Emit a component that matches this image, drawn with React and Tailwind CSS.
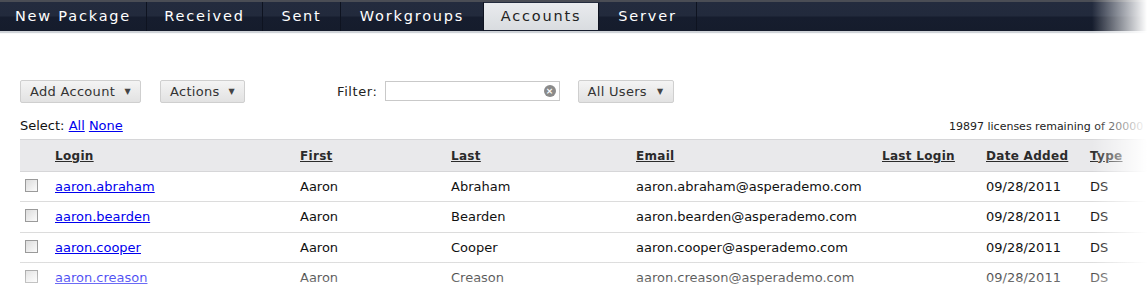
import React from 'react';

const tabs = ['New Package', 'Received', 'Sent', 'Workgroups', 'Accounts', 'Server'];
const tabWidths = ['w-[147px]', 'w-[116px]', 'w-[78px]', 'w-[143px]', 'w-[115px]', 'w-[98px]'];

const rows = [
    { login: 'aaron.abraham', first: 'Aaron', last: 'Abraham', email: 'aaron.abraham@asperademo.com', date: '09/28/2011', type: 'DS' },
    { login: 'aaron.bearden', first: 'Aaron', last: 'Bearden', email: 'aaron.bearden@asperademo.com', date: '09/28/2011', type: 'DS' },
    { login: 'aaron.cooper', first: 'Aaron', last: 'Cooper', email: 'aaron.cooper@asperademo.com', date: '09/28/2011', type: 'DS' },
    { login: 'aaron.creason', first: 'Aaron', last: 'Creason', email: 'aaron.creason@asperademo.com', date: '09/28/2011', type: 'DS' }
];

function DropButton({ label, width }) {
    return (
        <button className={`${width} h-[23px] flex items-center justify-between pl-[9px] pr-[9px] border border-[#cfcfcf] rounded-[2px] bg-gradient-to-b from-[#f4f4f4] to-[#e2e2e2] text-[13px] tracking-[0.3px] text-[#333]`}>
            <span>{label}</span>
            <span className="text-[8px] text-[#444] mt-[1px]">▼</span>
        </button>
    );
}

function Checkbox() {
    return <span className="block w-[13px] h-[13px] border border-[#9a9a9a] bg-gradient-to-br from-[#dcdcdc] to-[#fbfbfb]" />;
}

export default function App() {
    return (
        <div className="relative w-[1147px] h-[288px] overflow-hidden bg-white text-[#111]" style={{ fontFamily: '"DejaVu Sans", Verdana, sans-serif' }}>
            {/* Top navigation */}
            <div className="border-t-2 border-[#4a4d55] shadow-[0_2px_1px_#cfd3d8]">
                <div className="flex h-[29px] bg-[linear-gradient(to_bottom,#232b3e_0%,#222a3c_48%,#161d2e_52%,#151c2c_100%)]">
                    {tabs.map((tab, i) => (
                        <div
                            key={tab}
                            className={`${tabWidths[i]} flex items-center justify-center border-r border-[#0e1320] text-[14.5px] tracking-[1.8px] ${tab === 'Accounts' ? 'bg-gradient-to-b from-[#e9ebee] to-[#d9dce0] text-[#222] mt-[1px] mb-[1px]' : 'text-white'}`}
                        >
                            {tab}
                        </div>
                    ))}
                </div>
            </div>

            {/* Toolbar */}
            <div className="flex items-center mt-[49px] pl-[20px] h-[23px]">
                <DropButton label="Add Account" width="w-[121px]" />
                <div className="ml-[19px]"><DropButton label="Actions" width="w-[85px]" /></div>
                <span className="ml-[92px] text-[13px] tracking-[0.6px] text-[#222]">Filter:</span>
                <div className="ml-[7px] relative w-[175px] h-[20px] border border-[#c9c9c9] -mt-[2px]">
                    <span className="absolute right-[3px] top-[3px] w-[12px] h-[12px] rounded-full bg-[#8a8a8a] text-white text-[9px] leading-[12px] text-center font-bold">×</span>
                </div>
                <div className="ml-[18px]"><DropButton label="All Users" width="w-[96px]" /></div>
            </div>

            {/* Select / licenses */}
            <div className="flex items-end justify-between mt-[15px] pl-[20px] h-[17px]">
                <div className="text-[13px] text-[#111]">
                    Select: <a className="text-[#0000ee] underline">All</a> <a className="text-[#0000ee] underline">None</a>
                </div>
                <div className="text-[11px] text-[#222] whitespace-nowrap w-[198px] overflow-hidden">19897 licenses remaining of 20000</div>
            </div>

            {/* Table */}
            <div className="ml-[20px] mt-[4px] w-[1200px]">
                <div className="flex items-center h-[33px] bg-[#e9e9eb] border-t border-b border-[#d6d6d8] text-[12px] font-bold tracking-[0.3px] text-[#2b2b2b]">
                    <div className="w-[35px]" />
                    <div className="w-[245px]"><span className="underline">Login</span></div>
                    <div className="w-[151px]"><span className="underline">First</span></div>
                    <div className="w-[185px]"><span className="underline">Last</span></div>
                    <div className="w-[246px]"><span className="underline">Email</span></div>
                    <div className="w-[104px]"><span className="underline">Last Login</span></div>
                    <div className="w-[104px]"><span className="underline">Date Added</span></div>
                    <div className="w-[60px]"><span className="underline">Type</span></div>
                </div>
                {rows.map((r, i) => (
                    <div key={r.login} className={`flex items-center ${i === 1 ? 'h-[31px]' : 'h-[30px]'} border-b border-[#dcdcdc] text-[13px] text-[#111]`}>
                        <div className="w-[35px] pl-[5px] -mt-[3px]"><Checkbox /></div>
                        <div className="w-[245px]"><a className="text-[#0000ee] underline">{r.login}</a></div>
                        <div className="w-[151px]">{r.first}</div>
                        <div className="w-[185px]">{r.last}</div>
                        <div className="w-[246px]">{r.email}</div>
                        <div className="w-[104px]" />
                        <div className="w-[104px]">{r.date}</div>
                        <div className="w-[60px]">{r.type}</div>
                    </div>
                ))}
            </div>

            {/* Edge fades */}
            <div className="absolute top-0 right-0 w-[55px] h-full bg-gradient-to-r from-transparent to-white" />
            <div className="absolute bottom-0 left-0 w-full h-[28px] bg-gradient-to-b from-transparent to-white/50" />
        </div>
    );
}
